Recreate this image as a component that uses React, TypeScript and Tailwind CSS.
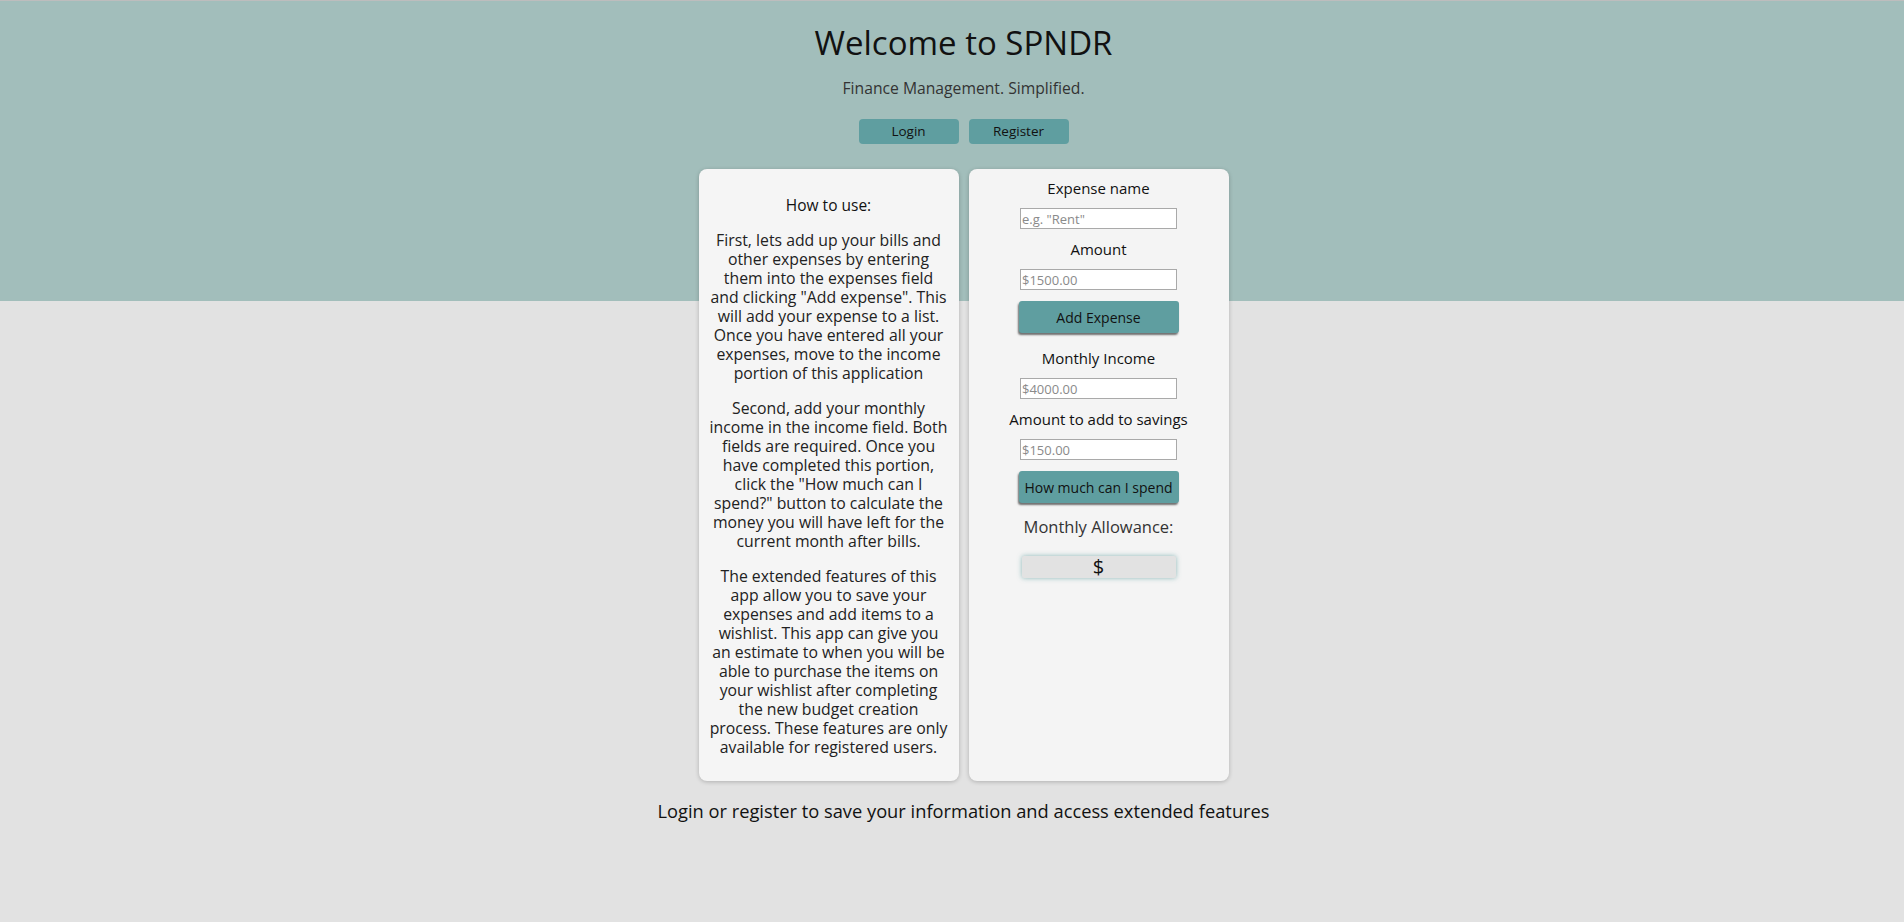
const Field = ({ label, placeholder, gap = 'mt-[11px]' }: { label: string; placeholder: string; gap?: string }) => {
  return (
    <>
      <label className={`text-[15px] leading-[19px] font-medium text-[#111] ${gap}`}>
        {label}
      </label>
      <input
        type="text"
        placeholder={placeholder}
        className="mt-[10px] w-[157px] h-[21px] border border-[#a9a9a9] bg-white px-[1px] text-[13px] placeholder:text-[#8a8a8a] outline-none"
      />
    </>
  );
};

const ActionButton = ({ children }: { children: string }) => {
  return (
    <button
      type="button"
      className="mt-[11px] w-[160px] h-[32px] rounded-[3px] bg-[#5f9ea0] text-[14px] text-[#111] shadow-[-1px_2px_2px_rgba(0,0,0,0.55)]"
    >
      {children}
    </button>
  );
};

const App = () => {
  return (
    <div className="min-h-screen border-t border-[#bdbdbd] bg-[linear-gradient(to_bottom,#a2bebb_300px,#e2e2e2_300px)] font-['Open_Sans',sans-serif] text-[#111]">
      <div className="flex flex-col items-center pl-[23px]">
        <h1 className="mt-[23px] text-[33px] leading-[38px] font-normal">Welcome to SPNDR</h1>
        <p className="mt-[16px] text-[15.7px] leading-[20px] text-[#333]">Finance Management. Simplified.</p>

        <div className="mt-[21px] flex gap-[10px]">
          <button type="button" className="w-[100px] h-[25px] rounded-[4px] bg-[#5f9ea0] text-[13.5px] text-[#111]">
            Login
          </button>
          <button type="button" className="w-[100px] h-[25px] rounded-[4px] bg-[#5f9ea0] text-[13.5px] text-[#111]">
            Register
          </button>
        </div>

        {/* cards */}
        <div className="mt-[25px] flex gap-[10px]">
          <div className="w-[260px] rounded-[8px] bg-[#f5f5f5] px-[10px] pt-[27px] pb-[24px] text-center shadow-[0_1px_4px_rgba(0,0,0,0.22)]">
            <h2 className="text-[15.5px] leading-[19px] font-medium">How to use:</h2>
            <p className="mt-[16px] text-[15.8px] leading-[19px] text-[#222] whitespace-nowrap">
              First, lets add up your bills and<br />
              other expenses by entering<br />
              them into the expenses field<br />
              and clicking "Add expense". This<br />
              will add your expense to a list.<br />
              Once you have entered all your<br />
              expenses, move to the income<br />
              portion of this application
            </p>
            <p className="mt-[16px] text-[15.8px] leading-[19px] text-[#222] whitespace-nowrap">
              Second, add your monthly<br />
              income in the income field. Both<br />
              fields are required. Once you<br />
              have completed this portion,<br />
              click the "How much can I<br />
              spend?" button to calculate the<br />
              money you will have left for the<br />
              current month after bills.
            </p>
            <p className="mt-[16px] text-[15.8px] leading-[19px] text-[#222] whitespace-nowrap">
              The extended features of this<br />
              app allow you to save your<br />
              expenses and add items to a<br />
              wishlist. This app can give you<br />
              an estimate to when you will be<br />
              able to purchase the items on<br />
              your wishlist after completing<br />
              the new budget creation<br />
              process. These features are only<br />
              available for registered users.
            </p>
          </div>

          <div className="w-[260px] rounded-[8px] bg-[#f4f4f4] pt-[10px] flex flex-col items-center shadow-[0_1px_4px_rgba(0,0,0,0.22)]">
            <Field label="Expense name" placeholder='e.g. "Rent"' gap="mt-0" />
            <Field label="Amount" placeholder="$1500.00" />
            <ActionButton>Add Expense</ActionButton>
            <Field label="Monthly Income" placeholder="$4000.00" gap="mt-[16px]" />
            <Field label="Amount to add to savings" placeholder="$150.00" />
            <ActionButton>How much can I spend</ActionButton>
            <p className="mt-[14px] text-[16.5px] leading-[20px] text-[#333]">Monthly Allowance:</p>
            <div className="mt-[19px] w-[154px] h-[22px] bg-[#e2e2e2] rounded-[2px] flex items-center justify-center text-[20px] shadow-[0_0_5px_rgba(95,158,160,0.7)]">
              $
            </div>
          </div>
        </div>

        <p className="mt-[19px] text-[18.3px] leading-[22px] text-[#111]">
          Login or register to save your information and access extended features
        </p>
      </div>
    </div>
  );
};

export default App;
